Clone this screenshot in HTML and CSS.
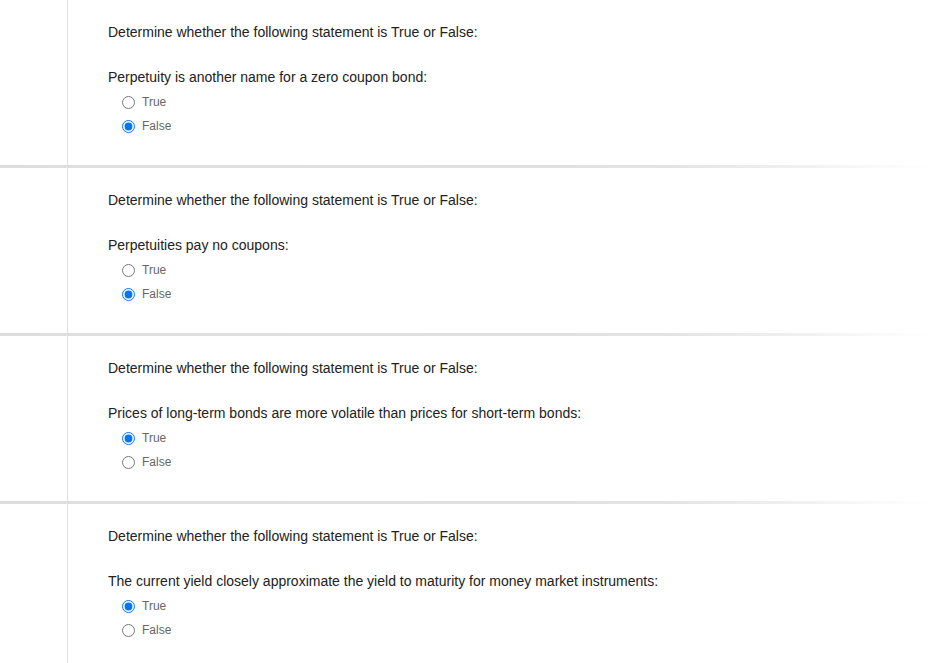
FILE: index.html
```
<!DOCTYPE html>
<html>
<head>
<meta charset="utf-8">
<link rel="stylesheet" href="styles.css">
</head>
<body>
<div class="page">
  <div class="block">
    <div class="gutter"></div>
    <div class="content">
      <p class="prompt">Determine whether the following statement is True or False:</p>
      <p class="question">Perpetuity is another name for a zero coupon bond:</p>
      <div class="options">
        <label class="option"><input type="radio" name="q1"><span>True</span></label>
        <label class="option"><input type="radio" name="q1" checked><span>False</span></label>
      </div>
    </div>
  </div>
  <div class="sep"></div>
  <div class="block">
    <div class="gutter"></div>
    <div class="content">
      <p class="prompt">Determine whether the following statement is True or False:</p>
      <p class="question">Perpetuities pay no coupons:</p>
      <div class="options">
        <label class="option"><input type="radio" name="q2"><span>True</span></label>
        <label class="option"><input type="radio" name="q2" checked><span>False</span></label>
      </div>
    </div>
  </div>
  <div class="sep"></div>
  <div class="block">
    <div class="gutter"></div>
    <div class="content">
      <p class="prompt">Determine whether the following statement is True or False:</p>
      <p class="question">Prices of long-term bonds are more volatile than prices for short-term bonds:</p>
      <div class="options">
        <label class="option"><input type="radio" name="q3" checked><span>True</span></label>
        <label class="option"><input type="radio" name="q3"><span>False</span></label>
      </div>
    </div>
  </div>
  <div class="sep"></div>
  <div class="block">
    <div class="gutter"></div>
    <div class="content">
      <p class="prompt">Determine whether the following statement is True or False:</p>
      <p class="question">The current yield closely approximate the yield to maturity for money market instruments:</p>
      <div class="options">
        <label class="option"><input type="radio" name="q4" checked><span>True</span></label>
        <label class="option"><input type="radio" name="q4"><span>False</span></label>
      </div>
    </div>
  </div>
</div>
</body>
</html>
```
FILE: styles.css
```
html, body {
  margin: 0;
  padding: 0;
  background: #fff;
}
body {
  font-family: "Liberation Sans", Arial, sans-serif;
  color: #222;
  overflow: hidden;
}
.page {
  width: 942px;
}
.block {
  display: flex;
  height: 165px;
}
.gutter {
  width: 67px;
  flex: none;
  border-right: 1px solid #dedede;
}
.content {
  padding: 22px 0 0 40px;
}
.prompt, .question {
  margin: 0;
  font-size: 14px;
  line-height: 20px;
}
.question {
  margin-top: 25px;
}
.options {
  margin-top: 3px;
  display: flex;
  flex-direction: column;
}
.option {
  display: flex;
  align-items: center;
  height: 24px;
  padding-left: 14px;
  font-size: 12px;
  color: #666;
}
.option input {
  margin: 0 7px 0 0;
  width: 13px;
  height: 13px;
}
.sep {
  height: 3px;
  background: linear-gradient(to right, #dedede 0%, #e2e2e2 70%, rgba(230,230,230,0) 99%);
}
```
